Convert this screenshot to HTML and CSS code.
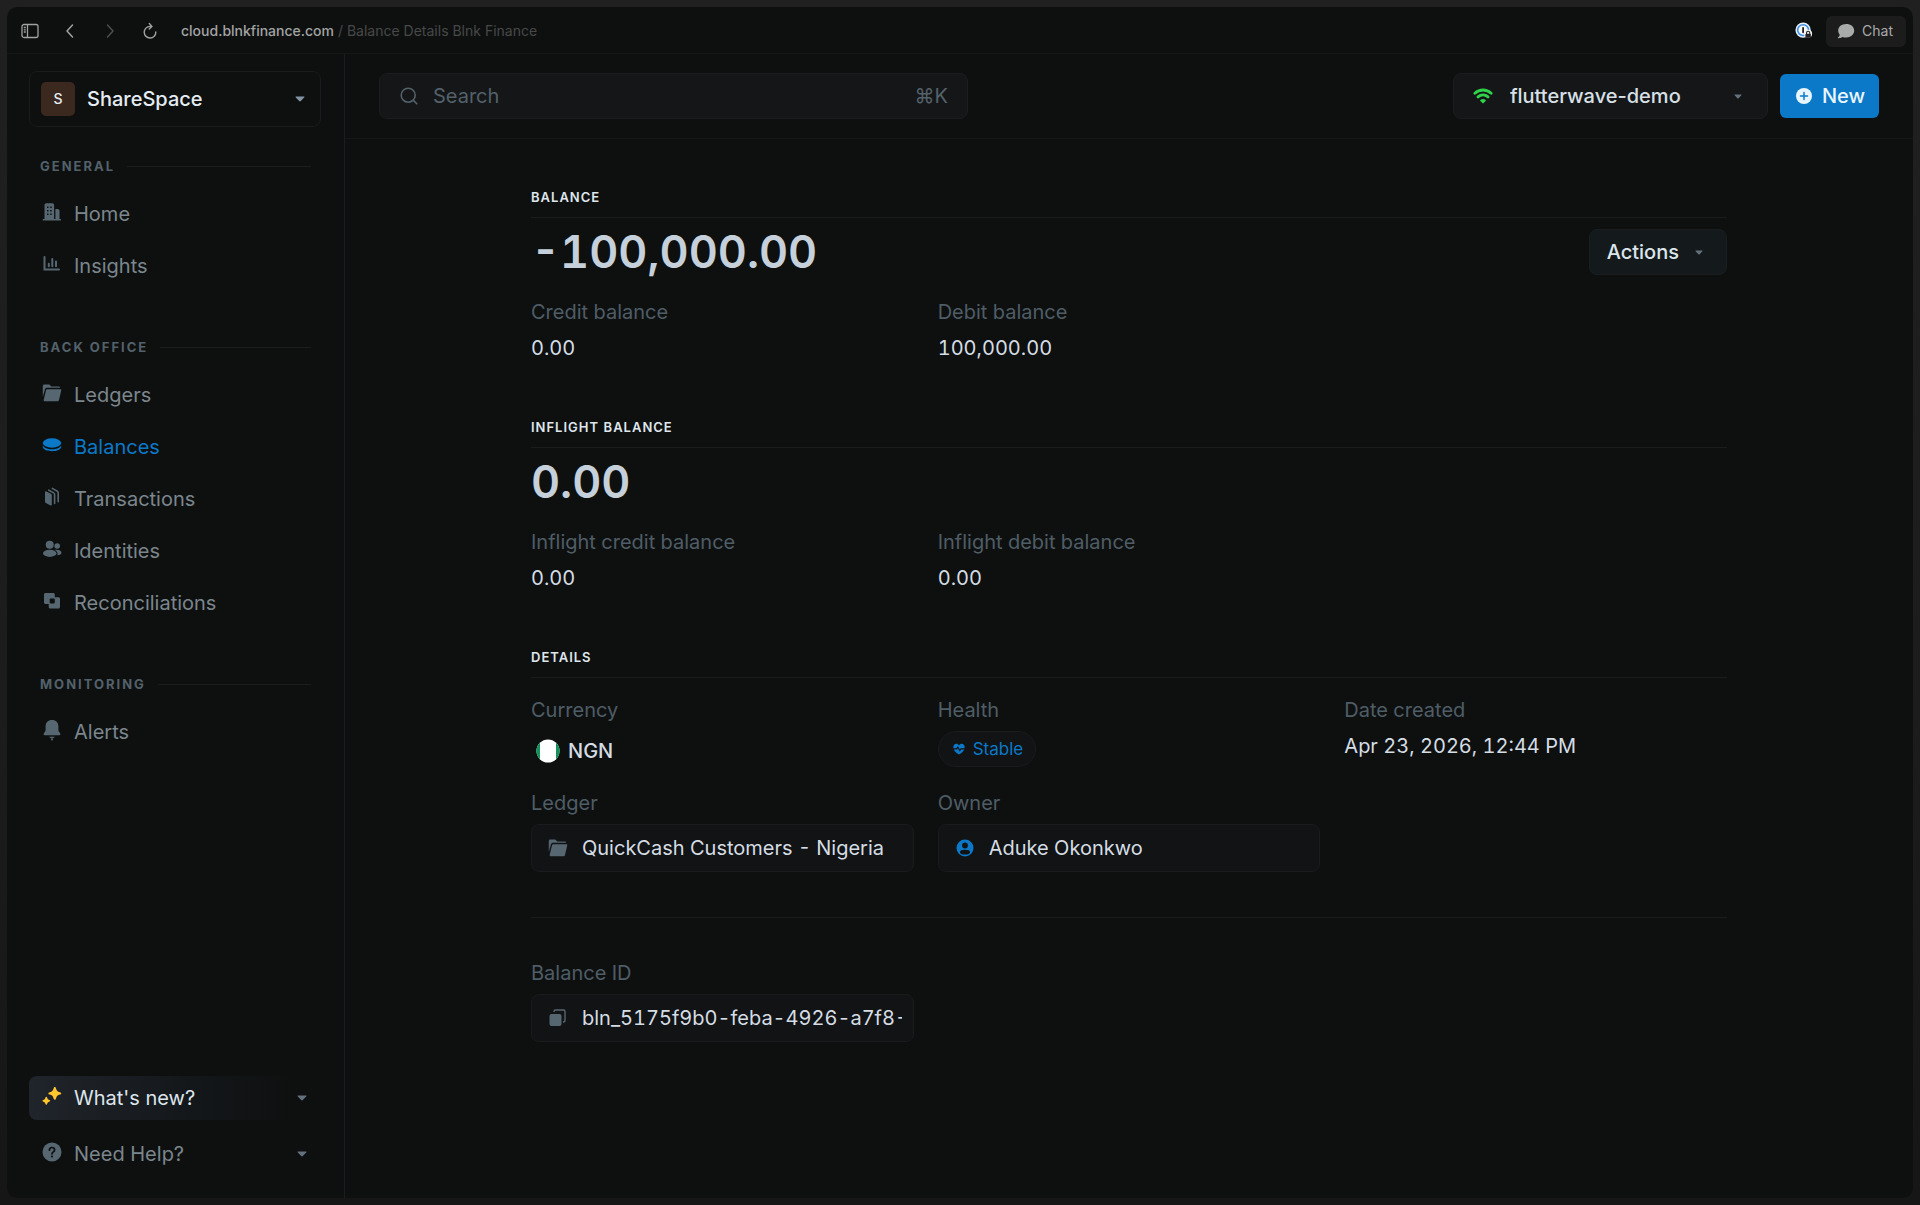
FILE: index.html
```html
<!DOCTYPE html>
<html lang="en">

<head>
    <meta charset="UTF-8">
    <meta name="viewport" content="width=device-width, initial-scale=1.0">
    <title>Balance Details Blnk Finance</title>
    <link rel="stylesheet" href="styles.css">
</head>

<body>
    <div class="window">
        <div class="titlebar">
            <button class="bar-btn" aria-label="Toggle sidebar">
                <svg width="18" height="16" viewBox="0 0 18 16" fill="none" stroke="currentColor" stroke-width="1.3"><rect x="1" y="1.5" width="16" height="13" rx="2"/><path d="M6.5 1.5v13M2.8 4.5h2M2.8 6.8h2M2.8 9h2"/></svg>
            </button>
            <button class="bar-btn" aria-label="Back">
                <svg width="18" height="18" viewBox="0 0 18 18" fill="none" stroke="currentColor" stroke-width="1.5" stroke-linecap="round" stroke-linejoin="round"><path d="M11.500 3L6 9l5.500 6"/></svg>
            </button>
            <button class="bar-btn off" aria-label="Forward">
                <svg width="18" height="18" viewBox="0 0 18 18" fill="none" stroke="currentColor" stroke-width="1.5" stroke-linecap="round" stroke-linejoin="round"><path d="M6.500 3L12 9l-5.500 6"/></svg>
            </button>
            <button class="bar-btn" aria-label="Reload">
                <svg width="18" height="18" viewBox="0 0 18 18" fill="none" stroke="currentColor" stroke-width="1.4" stroke-linecap="round" stroke-linejoin="round"><path d="M14.800 10A5.800 5.800 0 1 1 9 4.400h1.600"/><path d="M8.300 1.600l2.600 2.800-2.600 2.700"/></svg>
            </button>
            <div class="address"><span class="host">cloud.blnkfinance.com</span> / Balance Details Blnk Finance</div>
            <button class="bar-btn vault" aria-label="Password manager">
                <svg width="18" height="18" viewBox="0 0 20 20"><circle cx="9" cy="9" r="8.5" fill="#e8f1fb"/><circle cx="9" cy="9" r="6" fill="#f7fafd" stroke="#3f8fe6" stroke-width="1.8"/><rect x="8" y="5.5" width="2" height="7" rx="1" fill="#222"/><circle cx="14.5" cy="13" r="4.5" fill="#f2f2f2"/><path d="M12.800 13.500v-1.400a1.800 1.800 0 0 1 3.600 0v1.400" fill="none" stroke="#222" stroke-width="1.2"/><rect x="11.600" y="13" width="6" height="4.600" rx="1" fill="#222"/></svg>
            </button>
            <button class="chat">
                <svg width="18" height="16" viewBox="0 0 18 16" fill="currentColor"><path d="M9.200 1C4.700 1 1.200 3.800 1.200 7.600c0 1.700.6 3.100 1.500 4.200 0 1-.6 2-1.700 2.600-.4.3-.2.8.3.8 1.700 0 3-.4 4.100-1.200 1.200.4 2.400.6 3.800.6 4.500 0 8-3 8-7S13.700 1 9.200 1z"/></svg>
                Chat
            </button>
        </div>

        <div class="app">
            <aside class="sidebar">
                <div class="workspace">
                    <span class="avatar">S</span>
                    <select aria-label="Workspace">
                        <option>ShareSpace</option>
                    </select>
                    <svg class="caret" width="10" height="6" viewBox="0 0 10 6"><path d="M1.200.5h7.600c.6 0 .8.6.4 1L5.800 5.100c-.4.5-1.200.5-1.600 0L.8 1.500C.4 1.100.6.5 1.200.5z"/></svg>
                </div>

                <nav>
                    <section class="nav-group">
                        <h2>General</h2>
                        <a class="nav-item" href="#">
                            <svg width="20" height="20" viewBox="0 0 20 20"><path fill="currentColor" fill-rule="evenodd" d="M2.500 17V3c0-1 .8-1.800 1.800-1.800h6c1 0 1.800.8 1.800 1.800v14h1.300V7h2.300c1 0 1.800.8 1.800 1.800V17h1.300v1.500H.8V17zM5 4.500V6h1.500V4.500zm3.200 0V6h1.500V4.500zM5 8v1.500h1.500V8zm3.200 0v1.500h1.500V8zM5 11.500V13h1.500v-1.500zm3.200 0V13h1.500v-1.500z"/></svg>
                            Home
                        </a>
                        <a class="nav-item" href="#">
                            <svg width="20" height="20" viewBox="0 0 20 20" fill="none" stroke="currentColor" stroke-width="2" stroke-linecap="round"><path d="M2.500 3v12.500h14.500M6.800 9.800v2.400M10.300 5v7.200M14 7.500v4.700"/></svg>
                            Insights
                        </a>
                    </section>

                    <section class="nav-group">
                        <h2>Back office</h2>
                        <a class="nav-item" href="#">
                            <svg width="20" height="20" viewBox="0 0 20 20" fill="currentColor"><path d="M.8 14V3c0-.8.6-1.500 1.500-1.500h5l2 2h7.500c.8 0 1.300.5 1.300 1.200H5.200c-1.200 0-2 .6-2.300 1.700z"/><path d="M5.300 6.200h13.200c.6 0 1 .5.8 1.100l-2.300 9.600c-.2.8-.8 1.300-1.600 1.300H2.500c-.6 0-1-.5-.8-1.100l2.300-9.800c.2-.7.600-1.100 1.300-1.100z"/></svg>
                            Ledgers
                        </a>
                        <a class="nav-item active" href="#">
                            <svg width="20" height="20" viewBox="0 0 20 20" fill="currentColor"><ellipse cx="10" cy="8" rx="9.200" ry="4.700"/><path d="M.8 10.200c1 2.600 5 4 9.200 4s8.200-1.400 9.200-4v1.300c0 3-4.200 4.700-9.200 4.700s-9.200-1.700-9.200-4.700z"/></svg>
                            Balances
                        </a>
                        <a class="nav-item" href="#">
                            <svg width="20" height="20" viewBox="0 0 20 20"><path fill="currentColor" d="M3 5.200c0-.9.7-1.200 1.400-.8l4.500 2.400c.6.3.9.8.9 1.500v9.500c0 .7-.6 1-1.200.7l-4.800-2.600c-.5-.3-.8-.7-.8-1.300z"/><path fill="none" stroke="currentColor" stroke-width="1.600" stroke-linecap="round" d="M6.800 3.200l4.900 2.700c.6.300.9.8.9 1.500v9M10.300 1.400l5 2.900c.6.300.9.8.9 1.500v9"/></svg>
                            Transactions
                        </a>
                        <a class="nav-item" href="#">
                            <svg width="20" height="20" viewBox="0 0 20 20" fill="currentColor"><circle cx="7.700" cy="5.800" r="4"/><circle cx="15.200" cy="7" r="2.800"/><ellipse cx="7.700" cy="14.300" rx="6.700" ry="3.600"/><path d="M12.600 10.800c4-.6 6.900.8 6.900 2.900 0 1.500-1.600 2.500-4.200 2.500.7-2 .1-4-2.700-5.400z"/></svg>
                            Identities
                        </a>
                        <a class="nav-item" href="#">
                            <svg width="20" height="20" viewBox="0 0 20 20"><path fill="currentColor" fill-rule="evenodd" d="M3.500 2h7.800c.8 0 1.500.7 1.500 1.500v2.700h3.700c.8 0 1.500.7 1.500 1.500V16c0 .8-.7 1.500-1.500 1.500H8.200c-.8 0-1.500-.7-1.500-1.500v-3H3.500c-.8 0-1.500-.7-1.500-1.500v-8C2 2.700 2.700 2 3.500 2zM9 7.500c-.8 0-1.300.5-1.300 1.300v2.400c0 .8.5 1.300 1.300 1.300h2.500c.8 0 1.300-.5 1.300-1.300V8.800c0-.8-.5-1.300-1.300-1.300z"/></svg>
                            Reconciliations
                        </a>
                    </section>

                    <section class="nav-group">
                        <h2>Monitoring</h2>
                        <a class="nav-item" href="#">
                            <svg width="20" height="22" viewBox="0 0 20 22" fill="currentColor"><path d="M10 1C6 1 3.600 3.700 3.600 7.300v3.500c0 .6-.2 1.200-.5 1.700l-1.300 2c-.6 1-.1 1.700.9 1.700h14.600c1 0 1.500-.7.9-1.700l-1.300-2c-.3-.5-.5-1.100-.5-1.700V7.300C16.400 3.700 14 1 10 1zM7.300 17.800h5.400c-.4 1-1.500 1.600-2.700 1.600s-2.300-.6-2.700-1.600z"/><circle cx="10" cy="20.600" r="1"/></svg>
                            Alerts
                        </a>
                    </section>
                </nav>

                <div class="sidebar-foot">
                    <button class="nav-item news" aria-haspopup="true">
                        <svg width="20" height="20" viewBox="0 0 20 20" fill="#ffc62e"><path d="M12.800 1c.6 0 .9.5 1.200 1.400.8 2.300 1.500 3 3.800 3.800.9.3 1.400.6 1.400 1.200s-.5.900-1.400 1.200c-2.300.8-3 1.500-3.800 3.800-.3.900-.6 1.400-1.200 1.400s-.9-.5-1.200-1.400c-.8-2.300-1.500-3-3.800-3.800-.9-.3-1.400-.6-1.400-1.200s.5-.9 1.400-1.200c2.300-.8 3-1.500 3.800-3.800.3-.9.600-1.400 1.200-1.400z"/><path d="M4.300 10.800c.5 0 .7.4.9 1 .4 1.300.8 1.700 2 2.100.6.200 1 .4 1 .9s-.4.7-1 .9c-1.200.4-1.600.8-2 2-.2.700-.4 1-.9 1s-.7-.3-.9-1c-.4-1.200-.8-1.600-2-2-.6-.2-1-.4-1-.9s.4-.7 1-.9c1.200-.4 1.600-.8 2-2.100.2-.6.4-1 .9-1z"/></svg>
                        What's new?
                        <svg class="caret" width="10" height="6" viewBox="0 0 10 6"><path d="M1.200.5h7.600c.6 0 .8.6.4 1L5.800 5.100c-.4.5-1.200.5-1.600 0L.8 1.500C.4 1.100.6.5 1.200.5z"/></svg>
                    </button>
                    <button class="nav-item" aria-haspopup="true">
                        <svg width="20" height="20" viewBox="0 0 20 20"><circle cx="10" cy="10" r="9.500" fill="currentColor"/><path d="M7.400 8.200C7.400 6.600 8.500 5.500 10 5.500s2.600 1 2.600 2.400c0 2-2.600 2-2.600 4" fill="none" stroke="#0e1010" stroke-width="1.700" stroke-linecap="round"/><circle cx="10" cy="14.500" r="1.100" fill="#0e1010"/></svg>
                        Need Help?
                        <svg class="caret" width="10" height="6" viewBox="0 0 10 6"><path d="M1.200.5h7.600c.6 0 .8.6.4 1L5.800 5.100c-.4.5-1.200.5-1.600 0L.8 1.500C.4 1.100.6.5 1.200.5z"/></svg>
                    </button>
                </div>
            </aside>

            <main>
                <header class="topbar">
                    <label class="search">
                        <svg width="18" height="18" viewBox="0 0 18 18" fill="none" stroke="currentColor" stroke-width="1.600" stroke-linecap="round"><circle cx="8.200" cy="8.200" r="7"/><path d="M13.400 13.400l3.400 3.400"/></svg>
                        <input type="search" placeholder="Search" aria-label="Search">
                        <kbd>⌘K</kbd>
                    </label>
                    <div class="env">
                        <svg width="20" height="16" viewBox="0 0 20 16"><path fill="none" stroke="#2fd04a" stroke-width="2.900" stroke-linecap="round" d="M1.900 5.200c4.600-4.200 11.600-4.200 16.200 0M5 8.900c2.900-2.600 7.100-2.600 10 0"/><path fill="#2fd04a" d="M7.300 12c1.500-1.400 3.900-1.400 5.400 0 .3.300.3.600 0 .9l-2.100 2.200c-.4.400-.8.400-1.200 0l-2.100-2.200c-.3-.3-.3-.6 0-.9z"/></svg>
                        <select aria-label="Environment">
                            <option>flutterwave-demo</option>
                        </select>
                        <svg class="caret" width="8" height="5" viewBox="0 0 10 6"><path d="M1.200.5h7.600c.6 0 .8.6.4 1L5.800 5.100c-.4.5-1.200.5-1.600 0L.8 1.500C.4 1.100.6.5 1.200.5z"/></svg>
                    </div>
                    <button class="new">
                        <svg width="16" height="16" viewBox="0 0 16 16"><circle cx="8" cy="8" r="8" fill="#eaf6ff"/><path d="M8 4.500v7M4.500 8h7" stroke="#0b79c8" stroke-width="1.500" stroke-linecap="round"/></svg>
                        New
                    </button>
                </header>

                <div class="content">
                    <section class="block">
                        <h3>Balance</h3>
                        <div class="amount-row">
                            <span class="amount">-100,000.00</span>
                            <button class="actions" aria-haspopup="true">
                                Actions
                                <svg class="caret" width="8" height="5" viewBox="0 0 10 6"><path d="M1.200.5h7.600c.6 0 .8.6.4 1L5.800 5.100c-.4.5-1.200.5-1.600 0L.8 1.500C.4 1.100.6.5 1.200.5z"/></svg>
                            </button>
                        </div>
                        <dl class="fields">
                            <div><dt>Credit balance</dt><dd>0.00</dd></div>
                            <div><dt>Debit balance</dt><dd>100,000.00</dd></div>
                        </dl>
                    </section>

                    <section class="block">
                        <h3>Inflight balance</h3>
                        <div class="amount-row">
                            <span class="amount">0.00</span>
                        </div>
                        <dl class="fields">
                            <div><dt>Inflight credit balance</dt><dd>0.00</dd></div>
                            <div><dt>Inflight debit balance</dt><dd>0.00</dd></div>
                        </dl>
                    </section>

                    <section class="block details">
                        <h3>Details</h3>
                        <dl class="fields">
                            <div>
                                <dt>Currency</dt>
                                <dd class="currency">
                                    <svg width="24" height="24" viewBox="0 0 24 24"><clipPath id="flag"><circle cx="12" cy="12" r="11.500"/></clipPath><g clip-path="url(#flag)"><path fill="#fff" d="M0 0h24v24H0z"/><path fill="#12925a" d="M0 0h4v24H0zM20 0h4v24h-4z"/></g></svg>
                                    NGN
                                </dd>
                            </div>
                            <div>
                                <dt>Health</dt>
                                <dd>
                                    <span class="pill">
                                        <svg width="12" height="12" viewBox="0 0 12 12"><path fill="currentColor" d="M6 11.600C2.500 9.600.3 7.200.3 4.200.3 2.200 1.600.8 3.300.8c1.100 0 2.100.6 2.700 1.500C6.600 1.400 7.600.8 8.700.8c1.700 0 3 1.400 3 3.400 0 3-2.200 5.400-5.700 7.400z"/><path fill="none" stroke="#111315" stroke-width="1.200" d="M0 5.800h3.700l1.100-1.700 2 3.400 1.200-1.700h4"/></svg>
                                        Stable
                                    </span>
                                </dd>
                            </div>
                            <div><dt>Date created</dt><dd>Apr 23, 2026, 12:44 PM</dd></div>
                            <div>
                                <dt>Ledger</dt>
                                <dd>
                                    <a class="box" href="#">
                                        <svg width="20" height="20" viewBox="0 0 20 20" fill="currentColor"><path d="M.8 14V3c0-.8.6-1.500 1.500-1.500h5l2 2h7.500c.8 0 1.300.5 1.300 1.200H5.200c-1.200 0-2 .6-2.300 1.700z"/><path d="M5.300 6.200h13.200c.6 0 1 .5.8 1.100l-2.300 9.600c-.2.8-.8 1.300-1.600 1.300H2.500c-.6 0-1-.5-.8-1.100l2.300-9.800c.2-.7.600-1.100 1.300-1.100z"/></svg>
                                        QuickCash Customers - Nigeria
                                    </a>
                                </dd>
                            </div>
                            <div>
                                <dt>Owner</dt>
                                <dd>
                                    <a class="box owner" href="#">
                                        <svg width="20" height="20" viewBox="0 0 20 20"><circle cx="10" cy="10" r="8.500" fill="currentColor"/><circle cx="10" cy="7.500" r="2.900" fill="#111315"/><ellipse cx="10" cy="14.200" rx="5" ry="2.400" fill="#111315"/></svg>
                                        Aduke Okonkwo
                                    </a>
                                </dd>
                            </div>
                        </dl>
                    </section>

                    <div class="fields identifier">
                        <div>
                            <label for="balance-id">Balance ID</label>
                            <div class="box">
                                <button class="copy" aria-label="Copy balance ID">
                                    <svg width="20" height="20" viewBox="0 0 20 20"><rect x="1.500" y="6" width="12" height="12" rx="2" fill="currentColor"/><path d="M6 4V3.500C6 2.500 6.500 2 7.500 2h8c1 0 1.500.5 1.500 1.500v9c0 1-.5 1.500-1.500 1.500h-.5" fill="none" stroke="currentColor" stroke-width="1.400"/></svg>
                                </button>
                                <input id="balance-id" type="text" value="bln_5175f9b0-feba-4926-a7f8-" readonly>
                            </div>
                        </div>
                    </div>
                </div>
            </main>
        </div>
    </div>
</body>

</html>
```
FILE: styles.css
```css
* {
    box-sizing: border-box;
}

body {
    margin: 0;
    padding: 7px;
    min-height: 100vh;
    display: flex;
    background: linear-gradient(to bottom, #202020, #1c1c1c 60%, #171617);
    font-family: Inter, "Liberation Sans", sans-serif;
    font-size: 20px;
    line-height: 24px;
    color: #d5dde4;
}

button,
input,
select,
kbd {
    font: inherit;
    color: inherit;
    background: none;
    border: none;
    padding: 0;
    margin: 0;
    outline: none;
}

button,
select {
    cursor: pointer;
}

select {
    appearance: none;
    flex: 1;
    min-width: 0;
}

input {
    min-width: 0;
    flex: 1;
}

a {
    color: inherit;
    text-decoration: none;
}

svg {
    display: block;
    flex-shrink: 0;
}

h2,
h3,
dl,
dd {
    margin: 0;
}

.window {
    flex: 1;
    display: flex;
    flex-direction: column;
    background: #0e1010;
    border-radius: 10px;
    overflow: hidden;
}

/* browser bar */
.titlebar {
    display: flex;
    align-items: center;
    height: 47px;
    padding: 2px 7px 0 14px;
    border-bottom: 1px solid #151717;
    font-size: 14px;
    color: #474848;
}

.bar-btn {
    width: 18px;
    margin-right: 22px;
    color: #a0a1a1;
}

.bar-btn.off {
    color: #4c4d4d;
}

.bar-btn.vault {
    margin-right: 13px;
}

.address {
    flex: 1;
}

.host {
    color: #a3a4a4;
    font-weight: 500;
}

.chat {
    display: flex;
    align-items: center;
    gap: 7px;
    height: 31px;
    padding: 0 13px 0 11px;
    border-radius: 6px;
    background: #1c1c1c;
    color: #a9abab;
}

.app {
    flex: 1;
    display: flex;
}

/* sidebar */
.sidebar {
    width: 338px;
    flex-shrink: 0;
    display: flex;
    flex-direction: column;
    padding: 17px 23px 22px 22px;
    border-right: 1px solid #1b1d1e;
}

.workspace {
    display: flex;
    align-items: center;
    gap: 12px;
    height: 56px;
    margin-bottom: 28px;
    padding: 0 15px 0 11px;
    border: 1px solid #191b1c;
    border-radius: 8px;
    font-weight: 500;
    color: #e6edf3;
}

.avatar {
    width: 34px;
    height: 34px;
    border-radius: 5px;
    background: #3b281f;
    font-size: 14px;
    line-height: 34px;
    text-align: center;
}

.caret {
    fill: #62717b;
}

.workspace .caret {
    fill: #8293a3;
}

.nav-group {
    display: flex;
    flex-direction: column;
    gap: 8px;
    margin-bottom: 48px;
}

.nav-group h2 {
    display: flex;
    align-items: center;
    gap: 12px;
    margin: 0 10px 7px 11px;
    font-size: 13px;
    line-height: 22px;
    font-weight: 700;
    letter-spacing: 2px;
    text-transform: uppercase;
    color: #53616a;
}

.nav-group h2::after {
    content: "";
    flex: 1;
    height: 1px;
    background: #1b1e1f;
}

.nav-item {
    display: flex;
    align-items: center;
    gap: 12px;
    height: 44px;
    padding: 0 14px 0 13px;
    border-radius: 8px;
    color: #7b868d;
    text-align: left;
}

.nav-item svg:first-child {
    color: #566771;
    margin-bottom: 4px;
}

.nav-item .caret {
    margin-left: auto;
}

.nav-item.active,
.nav-item.active svg:first-child {
    color: #0b79c8;
}

.sidebar-foot {
    display: flex;
    flex-direction: column;
    gap: 12px;
    margin-top: auto;
}

.sidebar-foot .nav-item.news {
    background: linear-gradient(to right, #20252b, #14171a 55%, #0e1010 90%);
    color: #dde5ec;
}

/* main column */
main {
    flex: 1;
    min-width: 0;
}

.topbar {
    display: flex;
    align-items: center;
    gap: 12px;
    padding: 19px 34px;
    border-bottom: 1px solid #151717;
}

.search,
.env {
    display: flex;
    align-items: center;
    height: 46px;
    border: 1px solid #1b1d1f;
    border-radius: 8px;
    background: #151618;
}

.search {
    flex: 0 1 589px;
    gap: 15px;
    margin-right: auto;
    padding: 0 19px 0 20px;
    color: #53616a;
}

.search input::placeholder {
    color: #53616a;
    opacity: 1;
}

.env {
    flex: 0 0 315px;
    gap: 17px;
    padding: 0 25px 0 19px;
    font-weight: 500;
    color: #d8e0e6;
}

.new {
    display: flex;
    align-items: center;
    gap: 10px;
    height: 44px;
    padding: 0 14px 0 16px;
    border-radius: 6px;
    background: #0b79c8;
    font-weight: 500;
    color: #eaf6ff;
}

.content {
    max-width: 1196px;
    margin: 0 auto;
    padding: 46px 0;
    font-variant-numeric: tabular-nums;
}

.block {
    margin-bottom: 52px;
}

.block h3 {
    padding-bottom: 8px;
    margin-bottom: 11px;
    border-bottom: 1px solid #191b1c;
    font-size: 13px;
    line-height: 24px;
    font-weight: 600;
    letter-spacing: 1px;
    text-transform: uppercase;
    color: #dfe6ec;
}

.amount-row {
    display: flex;
    align-items: center;
    justify-content: space-between;
    height: 46px;
    margin-bottom: 25px;
}

.amount {
    font-size: 45px;
    font-weight: 600;
    color: #c5d0da;
}

.actions {
    display: flex;
    align-items: center;
    gap: 16px;
    height: 46px;
    padding: 0 23px 0 17px;
    border: 1px solid #1a1e1f;
    border-radius: 8px;
    background: #141a1b;
    font-weight: 500;
    color: #dde5ec;
}

.fields {
    display: grid;
    grid-template-columns: repeat(3, 1fr);
    gap: 20px 24px;
}

.fields dt,
.fields label {
    display: block;
    margin-bottom: 9px;
    color: #4f5d66;
}

.fields dd {
    line-height: 30px;
}

.details {
    margin-bottom: 0;
    padding-bottom: 45px;
    border-bottom: 1px solid #191b1c;
}

.details h3 {
    margin-bottom: 20px;
}

.fields .currency {
    display: flex;
    align-items: center;
    gap: 8px;
    height: 40px;
    padding-left: 5px;
    font-weight: 500;
}

.pill {
    display: inline-flex;
    align-items: center;
    gap: 8px;
    height: 36px;
    padding: 0 12px 0 14px;
    border: 1px solid #191b1d;
    border-radius: 18px;
    background: #111315;
    font-size: 17px;
    vertical-align: top;
    color: #0b79c8;
}

.box {
    display: flex;
    align-items: center;
    gap: 14px;
    height: 48px;
    padding: 0 11px 0 16px;
    border: 1px solid #191b1d;
    border-radius: 8px;
    background: #111315;
}

.box svg {
    color: #566771;
}

.box.owner svg {
    color: #0b79c8;
}

.identifier {
    padding-top: 43px;
}
```
